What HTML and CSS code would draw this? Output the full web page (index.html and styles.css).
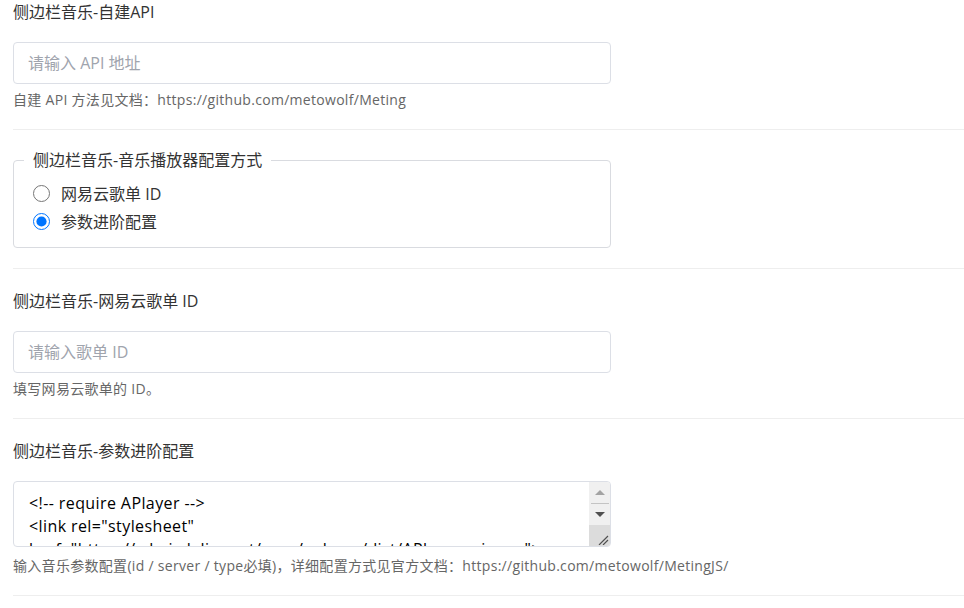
FILE: index.html
```html
<!DOCTYPE html>
<html lang="zh-CN">
<head>
<meta charset="utf-8">
<title>侧边栏音乐设置</title>
<link rel="stylesheet" href="styles.css">
</head>
<body>
<div class="form">
  <div class="section first">
    <label class="label">侧边栏音乐-自建API</label>
    <input class="text-input" type="text" placeholder="请输入 API 地址">
    <p class="help">自建 API 方法见文档：https://github.com/metowolf/Meting</p>
  </div>

  <div class="section fs-section">
    <fieldset class="group">
      <legend class="legend">侧边栏音乐-音乐播放器配置方式</legend>
      <label class="radio-row"><input type="radio" name="mode" class="radio"><span>网易云歌单 ID</span></label>
      <label class="radio-row"><input type="radio" name="mode" class="radio" checked><span>参数进阶配置</span></label>
    </fieldset>
  </div>

  <div class="section">
    <label class="label">侧边栏音乐-网易云歌单 ID</label>
    <input class="text-input" type="text" placeholder="请输入歌单 ID">
    <p class="help">填写网易云歌单的 ID。</p>
  </div>

  <div class="section">
    <label class="label">侧边栏音乐-参数进阶配置</label>
    <div class="code-wrap">
      <textarea class="code">&lt;!-- require APlayer --&gt;
&lt;link rel="stylesheet" href="https://cdn.jsdelivr.net/npm/aplayer/dist/APlayer.min.css"&gt;
&lt;script src="https://cdn.jsdelivr.net/npm/aplayer/dist/APlayer.min.js"&gt;&lt;/script&gt;
&lt;!-- require MetingJS --&gt;
&lt;script src="https://cdn.jsdelivr.net/npm/meting@2/dist/Meting.min.js"&gt;&lt;/script&gt;
&lt;meting-js server="netease" type="playlist" id="60198"&gt;&lt;/meting-js&gt;</textarea>
      <div class="scrollbar" aria-hidden="true">
        <div class="sb-buttons">
          <div class="sb-btn">
            <svg width="10" height="5" viewBox="0 0 10 5"><path d="M0 5 L5 0 L10 5 Z" fill="#a3a3a3"/></svg>
          </div>
          <div class="sb-sep"></div>
          <div class="sb-btn">
            <svg width="10" height="5" viewBox="0 0 10 5"><path d="M0 0 L10 0 L5 5 Z" fill="#505050"/></svg>
          </div>
        </div>
        <div class="sb-corner">
          <svg width="11" height="10" viewBox="0 0 11 10"><path d="M1 10 L10 1 M5 10 L10 5" stroke="#505050" stroke-width="1.2" fill="none"/></svg>
        </div>
      </div>
    </div>
    <p class="help help-ta">输入音乐参数配置(id / server / type必填)，详细配置方式见官方文档：https://github.com/metowolf/MetingJS/</p>
  </div>
</div>
</body>
</html>
```

FILE: styles.css
```css
* { box-sizing: border-box; }
html, body {
  margin: 0;
  padding: 0;
  background: #fff;
}
body {
  font-family: "Open Sans", "Noto Sans CJK SC", sans-serif;
  color: #333;
  overflow: hidden;
}
.form {
  padding-left: 13px;
}
.section {
  display: flex;
  flex-direction: column;
  align-items: flex-start;
  padding: 21px 0 20px;
  border-bottom: 1px solid #eeeeee;
}
.section.first {
  padding-top: 1px;
}
.label {
  display: block;
  font-size: 16px;
  line-height: 22px;
  color: #333;
  margin-bottom: 19px;
}
.text-input {
  display: block;
  width: 598px;
  height: 42px;
  margin: 0;
  padding: 0 14px;
  border: 1px solid #dcdfe6;
  border-radius: 4px;
  font-family: inherit;
  font-size: 16px;
  color: #333;
  outline: none;
}
.text-input::placeholder {
  color: #a0a4ad;
}
.help {
  margin: 7px 0 0;
  font-size: 14px;
  line-height: 18px;
  letter-spacing: 0.3px;
  color: #666;
}
.fs-section {
  padding-top: 19px;
}
.group {
  width: 598px;
  margin: 0;
  padding: 8px 10px 12px;
  border: 1px solid #d9dbe0;
  border-radius: 4px;
}
.legend {
  padding: 0 9px;
  font-size: 16px;
  line-height: 22px;
  color: #333;
}
.radio-row {
  display: flex;
  align-items: center;
  height: 28px;
  padding-left: 9px;
  font-size: 16px;
  color: #333;
}
.radio {
  width: 17px;
  height: 17px;
  margin: 0 11px 0 0;
}
.code-wrap {
  position: relative;
  width: 598px;
  height: 66px;
}
.code {
  display: block;
  width: 598px;
  height: 66px;
  margin: 0;
  padding: 10px 36px 8px 15px;
  border: 1px solid #dcdfe6;
  border-radius: 4px;
  font-family: inherit;
  font-size: 16px;
  line-height: 23px;
  letter-spacing: 0.4px;
  color: #000;
  resize: none;
  outline: none;
  overflow: hidden;
  scrollbar-width: none;
}
.scrollbar {
  position: absolute;
  top: 1px;
  right: 1px;
  bottom: 1px;
  width: 21px;
  display: flex;
  flex-direction: column;
  border-top-right-radius: 3px;
  border-bottom-right-radius: 3px;
  overflow: hidden;
}
.sb-buttons {
  flex: 0 0 43px;
  background: #f0f0f0;
  display: flex;
  flex-direction: column;
  align-items: center;
}
.sb-btn {
  flex: 1;
  display: flex;
  align-items: center;
  justify-content: center;
  width: 100%;
}
.sb-sep {
  width: 18px;
  height: 1px;
  background: #c4c4c4;
}
.sb-corner {
  flex: 1;
  background: #dcdcdc;
  display: flex;
  align-items: flex-end;
  justify-content: flex-end;
  padding: 0 1px 1px 0;
}
.help-ta {
  margin-top: 10px;
}
```
